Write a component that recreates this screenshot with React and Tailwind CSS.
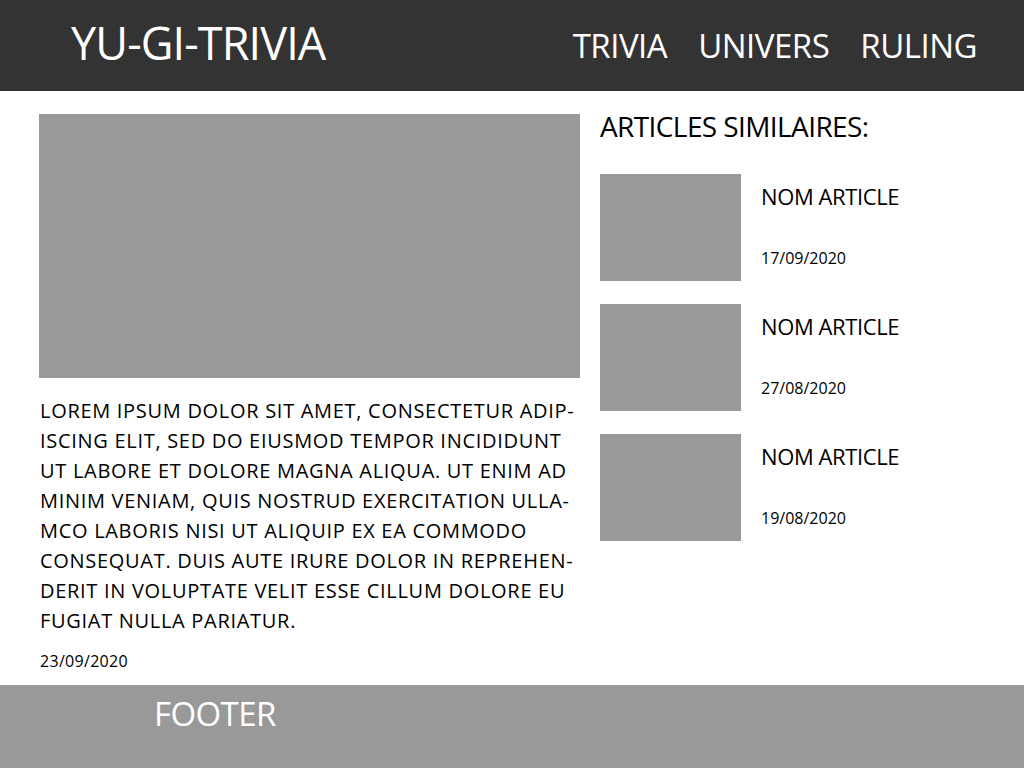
import React from 'react';

const lines = [
    'LOREM IPSUM DOLOR SIT AMET, CONSECTETUR ADIP-',
    'ISCING ELIT, SED DO EIUSMOD TEMPOR INCIDIDUNT',
    'UT LABORE ET DOLORE MAGNA ALIQUA. UT ENIM AD',
    'MINIM VENIAM, QUIS NOSTRUD EXERCITATION ULLA-',
    'MCO LABORIS NISI UT ALIQUIP EX EA COMMODO',
    'CONSEQUAT. DUIS AUTE IRURE DOLOR IN REPREHEN-',
    'DERIT IN VOLUPTATE VELIT ESSE CILLUM DOLORE EU',
    'FUGIAT NULLA PARIATUR.',
];

const similar = [
    { title: 'NOM ARTICLE', date: '17/09/2020' },
    { title: 'NOM ARTICLE', date: '27/08/2020' },
    { title: 'NOM ARTICLE', date: '19/08/2020' },
];

const App = () => {
    return (
        <div className="w-[1024px] h-[768px] flex flex-col bg-white font-['Open_Sans',sans-serif]">
            {/* Header */}
            <header className="h-[91px] bg-[#333333] flex items-center justify-between pl-[71px] pr-[47px] text-white">
                <h1 className="text-[45px] leading-none font-normal tracking-[-0.9px] -mt-[6px]">YU-GI-TRIVIA</h1>
                <nav className="flex gap-[31px] text-[33px] leading-none tracking-[-0.5px]">
                    <span>TRIVIA</span>
                    <span>UNIVERS</span>
                    <span>RULING</span>
                </nav>
            </header>

            {/* Content */}
            <main className="flex-1 flex">
                <section className="ml-[39px] w-[541px] pt-[23px]">
                    <div className="w-[541px] h-[264px] bg-[#999999]" />
                    <p className="mt-[18px] pl-[1px] text-[20px] leading-[30px] tracking-[0.7px] text-black">
                        {lines.map((l, i) => (
                            <span key={i} className="block whitespace-nowrap">{l}</span>
                        ))}
                    </p>
                    <p className="mt-[17px] pl-[1px] text-[16px] leading-none tracking-[0.3px] text-black">23/09/2020</p>
                </section>

                <aside className="ml-[20px] pt-[21px] flex-1">
                    <h2 className="text-[28px] leading-none tracking-[-0.6px] text-black">ARTICLES SIMILAIRES:</h2>
                    <div className="mt-[34px] flex flex-col gap-[23px]">
                        {similar.map((a, i) => (
                            <div key={i} className="flex">
                                <div className="w-[141px] h-[107px] bg-[#999999] shrink-0" />
                                <div className="ml-[20px] pt-[11px] flex flex-col">
                                    <span className="text-[22px] leading-none tracking-[-0.4px] text-black">{a.title}</span>
                                    <span className="mt-[43px] text-[16px] leading-none text-black">{a.date}</span>
                                </div>
                            </div>
                        ))}
                    </div>
                </aside>
            </main>

            {/* Footer */}
            <footer className="h-[83px] bg-[#999999] pl-[154px] pt-[12px] text-white">
                <span className="text-[33px] leading-none tracking-[-0.6px]">FOOTER</span>
            </footer>
        </div>
    );
};

export default App;
